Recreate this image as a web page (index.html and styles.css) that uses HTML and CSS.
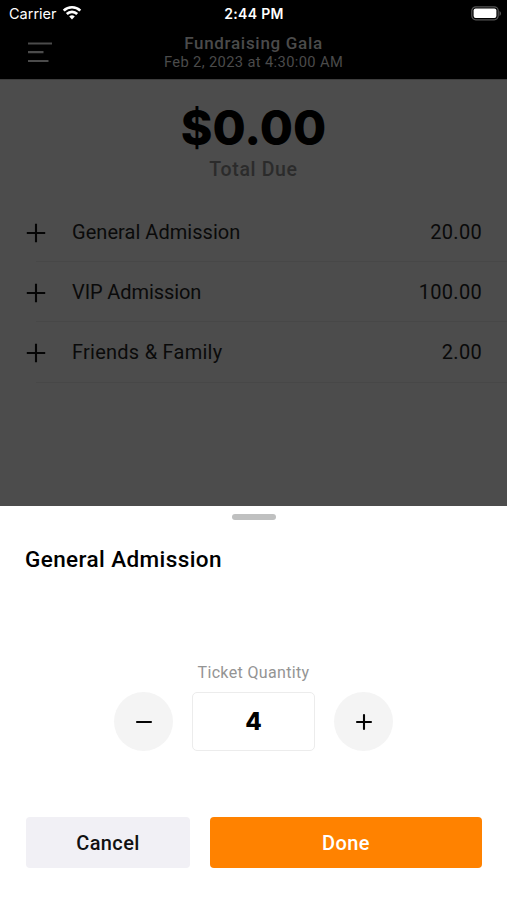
FILE: index.html
```html
<!DOCTYPE html>
<html lang="en">
<head>
<meta charset="utf-8">
<title>Fundraising Gala</title>
<link rel="stylesheet" href="styles.css">
</head>
<body>
<div class="screen">
  <div class="status">
    <div class="carrier"><span>Carrier</span>
      <svg width="20" height="15" viewBox="0 0 20 15" fill="none" stroke="#fff" stroke-width="2.7"><path d="M1.7 5.6a12 12 0 0 1 16.6 0M4.8 9a7.4 7.4 0 0 1 10.4 0"/><path d="M10 14.4l-2.8-2.8a4 4 0 0 1 5.6 0z" fill="#fff" stroke="none"/></svg>
    </div>
    <span class="time">2:44 PM</span>
    <svg class="battery" width="31" height="15" viewBox="0 0 31 15"><rect x=".8" y=".8" width="26.4" height="13" rx="4" fill="none" stroke="#555" stroke-width="1.2"/><rect x="2.6" y="2.6" width="22.8" height="9.4" rx="2" fill="#fff"/><path d="M28.5 5v5q1.5-.8 1.5-2.5t-1.5-2.5z" fill="#555"/></svg>
  </div>
  <header class="header">
    <svg class="menu" width="24" height="22" viewBox="0 0 24 22" stroke="#4b4b4b" stroke-width="2.2"><path d="M0 1.5h24M0 10.2h15.5M0 19h20.5"/></svg>
    <div class="heading"><h1>Fundraising Gala</h1><p>Feb 2, 2023 at 4:30:00 AM</p></div>
  </header>
  <main class="content">
    <div class="total">$0.00</div>
    <div class="due">Total Due</div>
    <ul class="list">
      <li><svg class="plus" width="20" height="20" viewBox="0 0 20 20"><path d="M.8 10h18.4M10 .8v18.4"/></svg><span class="name">General Admission</span><span class="price">20.00</span></li>
      <li><svg class="plus" width="20" height="20" viewBox="0 0 20 20"><path d="M.8 10h18.4M10 .8v18.4"/></svg><span class="name vip">VIP Admission</span><span class="price">100.00</span></li>
      <li><svg class="plus" width="20" height="20" viewBox="0 0 20 20"><path d="M.8 10h18.4M10 .8v18.4"/></svg><span class="name family">Friends &amp; Family</span><span class="price">2.00</span></li>
    </ul>
  </main>
  <section class="sheet">
    <div class="handle"></div>
    <h2>General Admission</h2>
    <div class="label">Ticket Quantity</div>
    <div class="stepper">
      <button class="round" aria-label="Decrease"><svg width="18" height="18" viewBox="0 0 18 18"><path d="M2 9h14"/></svg></button>
      <div class="quantity">4</div>
      <button class="round" aria-label="Increase"><svg width="18" height="18" viewBox="0 0 18 18"><path d="M2 9h14M9 2v14"/></svg></button>
    </div>
    <div class="actions"><button class="cancel">Cancel</button><button class="done">Done</button></div>
  </section>
</div>
</body>
</html>
```
FILE: styles.css
```css
* { box-sizing: border-box; }
body, h1, h2, p, ul { margin: 0; padding: 0; }
body { font-family: Roboto, "Liberation Sans", sans-serif; color: #000; background: #fff; }
button { border: 0; padding: 0; font: inherit; }
.screen { width: 507px; height: 900px; display: flex; flex-direction: column; overflow: hidden; white-space: nowrap; }
.status { height: 27px; background: #000; color: #fff; display: grid; grid-template-columns: 1fr auto 1fr; align-items: center; padding: 0 6px 0 9px; font: 500 14px/27px Inter, sans-serif; }
.carrier { display: flex; align-items: center; gap: 5px; font-weight: 400; font-size: 14.5px; }
.carrier svg { margin-bottom: 2px; }
.time { font-weight: 600; font-size: 14px; letter-spacing: .3px; margin-right: 2px; }
.battery { justify-self: end; margin-right: -1px; }
.header { height: 52px; background: #000; color: #4b4b4b; display: flex; padding: 0 28px; }
.menu { margin-top: 15px; }
.heading { flex: 1; margin-right: 24px; text-align: center; padding-top: 6px; }
h1 { font-size: 17px; line-height: 20px; font-weight: 500; letter-spacing: .7px; }
.heading p { font-size: 14.7px; line-height: 19px; letter-spacing: .37px; }
.content { height: 427px; background: #4c4c4c; border-top: 1px solid #3d3d3d; }
.total { margin-top: 19px; height: 58px; line-height: 58px; font-family: Inter, sans-serif; font-size: 48px; font-weight: 800; text-align: center; }
.due { height: 25px; line-height: 26px; font-size: 19.5px; font-weight: 500; text-align: center; color: #2b2b2b; letter-spacing: .65px; }
.list { list-style: none; margin-top: 20px; }
.list li { height: 60.2px; display: flex; align-items: center; padding: 0 25px 0 26px; background: linear-gradient(#474747,#474747) 36px 100% / 100% 1px no-repeat; color: #0a0a0a; font-size: 20px; }
.plus { stroke: #050505; stroke-width: 2.1; fill: none; margin-top: 2px; }
.name { margin-left: 26px; letter-spacing: .04px; }
.vip { letter-spacing: -.1px; }
.family { letter-spacing: .25px; }
.price { margin-left: auto; letter-spacing: .3px; }
.sheet { flex: 1; background: #fff; display: flex; flex-direction: column; padding: 8px 25px 32px; }
.handle { width: 44px; height: 6px; flex: none; border-radius: 3px; background: #bfc0c0; align-self: center; margin-left: 1px; }
h2 { margin: 25px 0 0; font-size: 22.5px; line-height: 28px; font-weight: 500; letter-spacing: .4px; }
.label { margin-top: 89px; text-align: center; font-size: 16px; line-height: 22px; color: #949494; letter-spacing: .35px; }
.stepper { display: flex; justify-content: center; align-items: center; gap: 19px; margin-top: 8px; }
.round { width: 59px; height: 59px; border-radius: 50%; background: #f4f4f4; display: grid; place-items: center; }
.round svg { stroke: #050505; stroke-width: 2.1; stroke-linecap: round; }
.quantity { width: 123px; height: 59px; border: 1.5px solid #ececec; border-radius: 5px; text-align: center; font-family: Inter, sans-serif; font-size: 24px; font-weight: 800; line-height: 57px; }
.actions { display: flex; gap: 20px; margin-top: auto; padding-left: 1px; }
.actions button { height: 51px; border-radius: 4px; font-size: 20px; font-weight: 500; letter-spacing: .4px; }
.actions .cancel { width: 164px; background: #f1f0f5; color: #111; }
.actions .done { flex: 1; background: #ff8200; color: #fff; }
```
